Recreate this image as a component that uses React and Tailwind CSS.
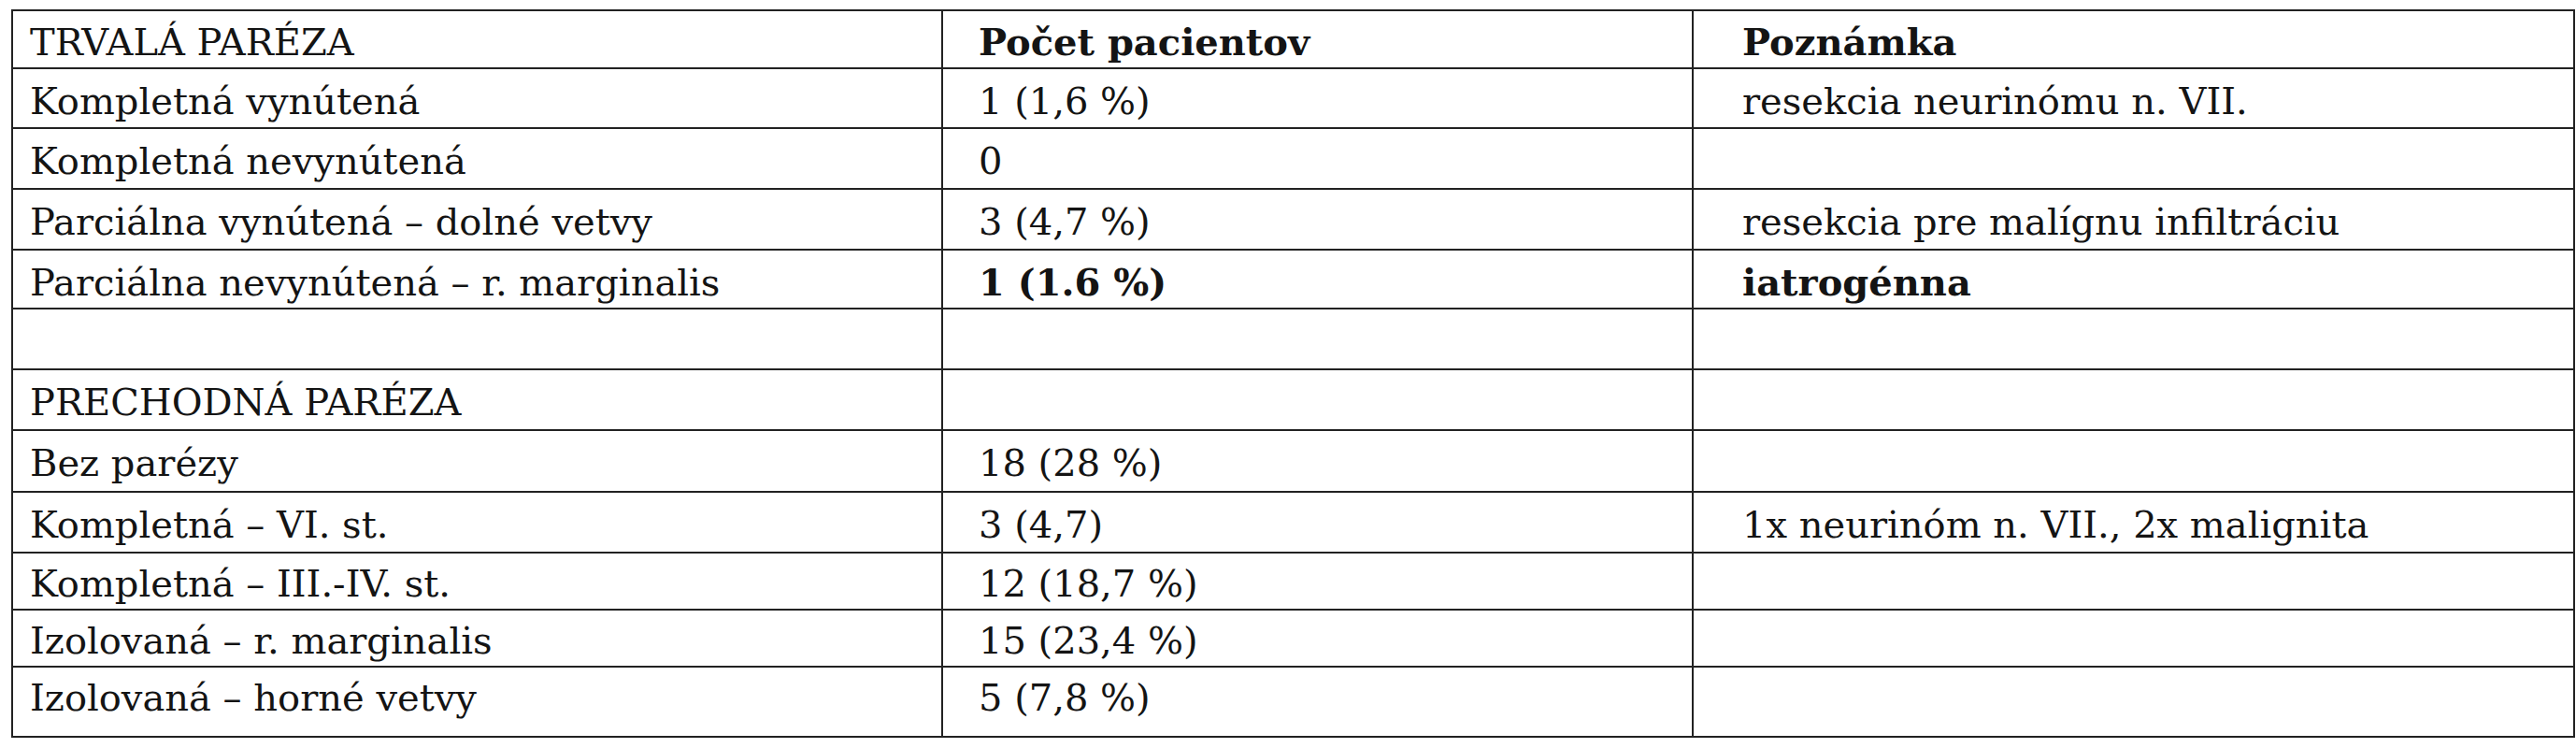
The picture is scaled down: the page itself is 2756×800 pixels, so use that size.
import React from "react";

const rows = [
  { a: "TRVALÁ PARÉZA", b: "Počet pacientov", c: "Poznámka", bb: true, cb: true, h: "h-[62px]", pt: "pt-[11px]" },
  { a: "Kompletná vynútená", b: "1 (1,6 %)", c: "resekcia neurinómu n. VII.", h: "h-[64px]" },
  { a: "Kompletná nevynútená", b: "0", c: "", h: "h-[65px]" },
  { a: "Parciálna vynútená – dolné vetvy", b: "3 (4,7 %)", c: "resekcia pre malígnu infiltráciu", h: "h-[65px]" },
  { a: "Parciálna nevynútená – r. marginalis", b: "1 (1.6 %)", c: "iatrogénna", bb: true, cb: true, h: "h-[63px]" },
  { a: "", b: "", c: "", h: "h-[65px]" },
  { a: "PRECHODNÁ PARÉZA", b: "", c: "", h: "h-[65px]" },
  { a: "Bez parézy", b: "18 (28 %)", c: "", h: "h-[66px]" },
  { a: "Kompletná – VI. st.", b: "3 (4,7)", c: "1x neurinóm n. VII., 2x malignita", h: "h-[65px]" },
  { a: "Kompletná – III.-IV. st.", b: "12 (18,7 %)", c: "", h: "h-[61px]", pt: "pt-[10px]" },
  { a: "Izolovaná – r. marginalis", b: "15 (23,4 %)", c: "", h: "h-[61px]", pt: "pt-[10px]" },
  { a: "Izolovaná – horné vetvy", b: "5 (7,8 %)", c: "", h: "h-[75px]", pt: "pt-[10px]" },
];

export default function App() {
  return (
    <div className="w-[2756px] h-[800px] bg-white pt-[10px] pl-[12px] font-['DejaVu_Serif','Liberation_Serif',serif]">
      <table className="table-fixed border-collapse text-[#141414] text-[40px] leading-[44px]">
        <colgroup>
          <col className="w-[995px]" />
          <col className="w-[803px]" />
          <col className="w-[943px]" />
        </colgroup>
        <tbody>
          {rows.map((r, i) => {
            const pt = r.pt || "pt-[12px]";
            return (
              <tr key={i} className={r.h}>
                <td className={`border-2 border-[#222] align-top ${pt} pl-[18px] whitespace-nowrap`}>{r.a}</td>
                <td className={`border-2 border-[#222] align-top ${pt} pl-[38px] whitespace-nowrap ${r.bb ? "font-bold" : ""}`}>{r.b}</td>
                <td className={`border-2 border-[#222] align-top ${pt} pl-[52px] whitespace-nowrap ${r.cb ? "font-bold" : ""}`}>{r.c}</td>
              </tr>
            );
          })}
        </tbody>
      </table>
    </div>
  );
}
